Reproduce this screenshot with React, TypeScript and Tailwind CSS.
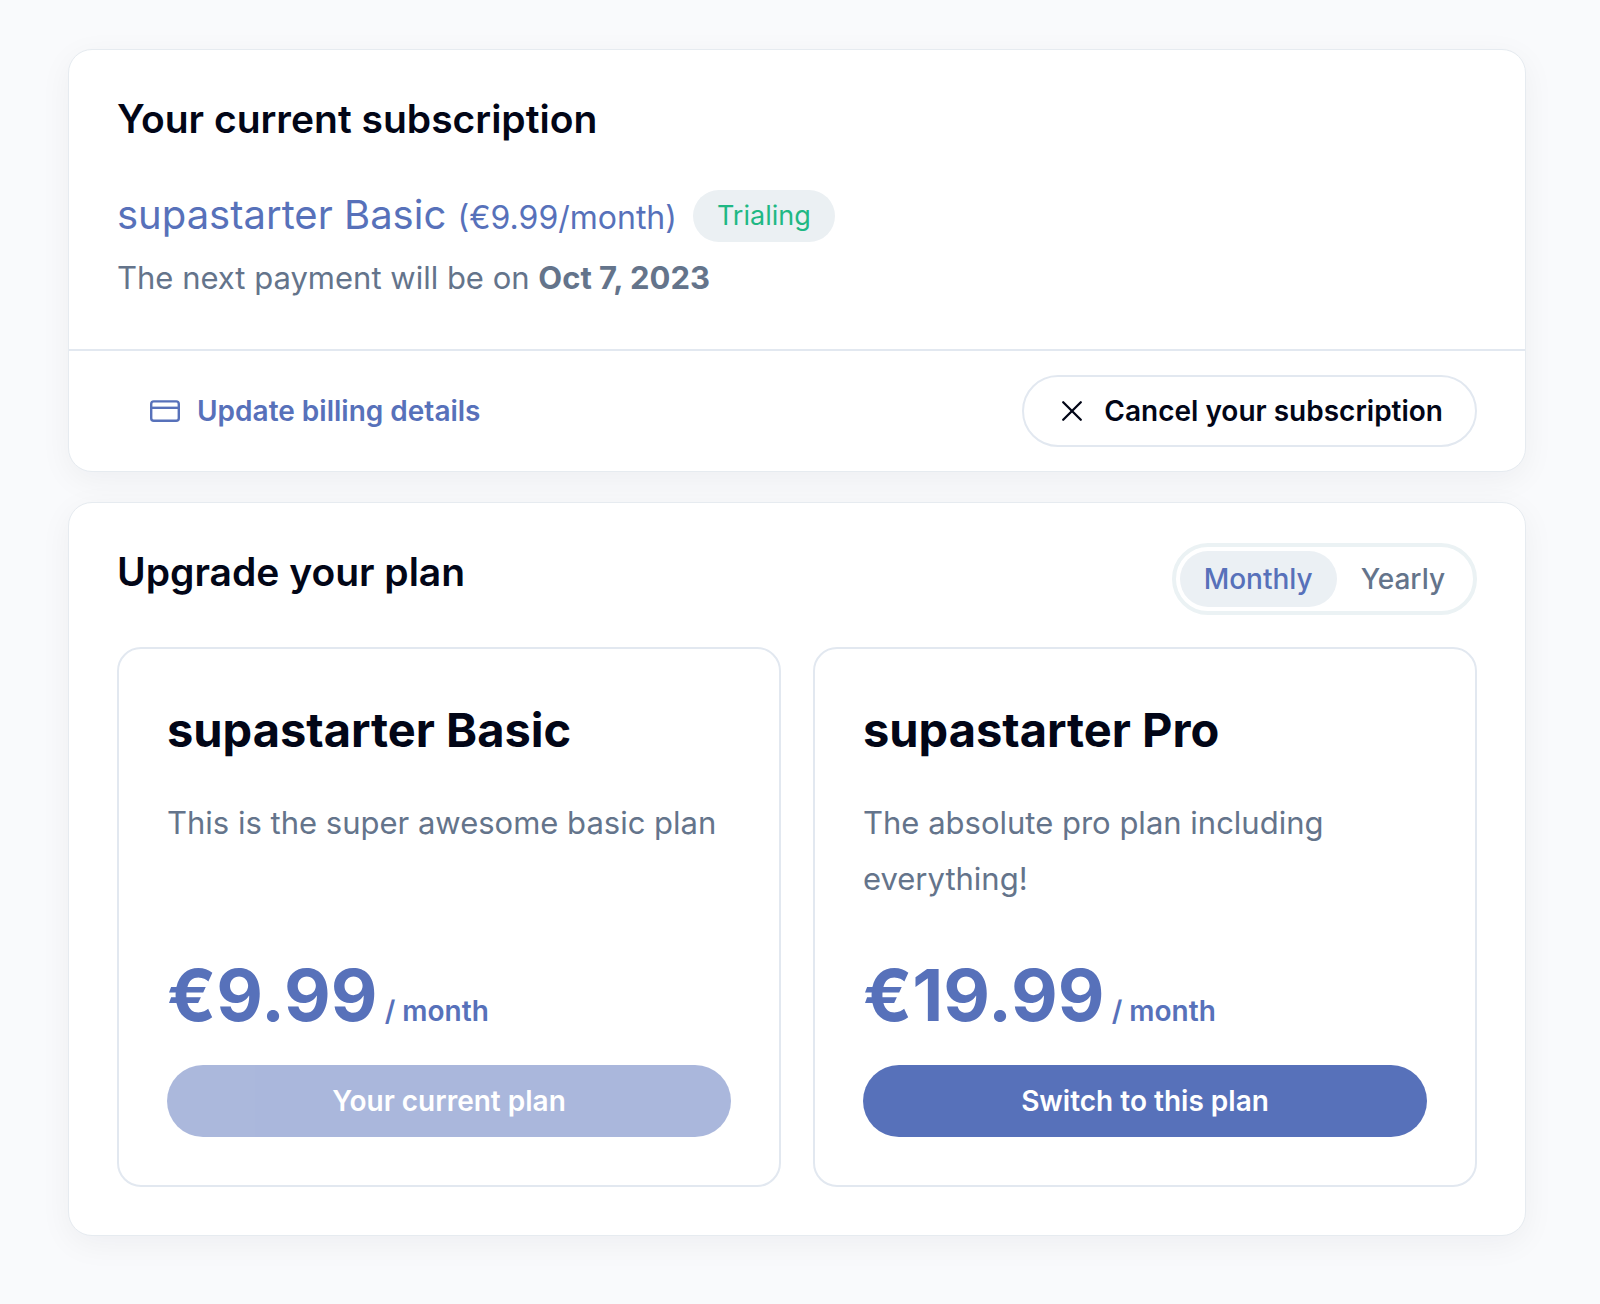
import { useState } from "react";

const plans = [
  {
    name: "supastarter Basic",
    description: "This is the super awesome basic plan",
    price: "€9.99",
    action: "Your current plan",
    current: true,
  },
  {
    name: "supastarter Pro",
    description: "The absolute pro plan including everything!",
    price: "€19.99",
    action: "Switch to this plan",
    current: false,
  },
];

function CardIcon() {
  return (
    <svg className="size-8 shrink-0" viewBox="0 0 32 32" fill="none" stroke="currentColor" strokeWidth="2.4" aria-hidden="true">
      <rect x="2.2" y="6.4" width="27.6" height="19.4" rx="2.6" />
      <path d="M2 12.8h28" />
    </svg>
  );
}

function CloseIcon() {
  return (
    <svg className="size-8 shrink-0" viewBox="0 0 32 32" fill="none" stroke="currentColor" strokeWidth="2.3" strokeLinecap="round" aria-hidden="true">
      <path d="M7.2 7.2l17.6 17.6M24.8 7.2L7.2 24.8" />
    </svg>
  );
}

const cardClass =
  "rounded-3xl border border-[#e6ebf0] bg-white shadow-[0_8px_32px_rgba(15,23,42,0.05)]";

function SubscriptionCard() {
  return (
    <section className={cardClass}>
      <div className="px-12 pt-10 pb-[45px]">
        <h2 className="text-[39px] leading-[58px] font-semibold">Your current subscription</h2>
        <div className="mt-8 flex h-[72px] items-center gap-4">
          <p className="text-[40px] leading-[60px] text-[#5771ba]">
            supastarter Basic <small className="text-[32px]">(€9.99/month)</small>
          </p>
          <span className="rounded-full bg-[#ebf0f3] px-6 text-[27px] leading-[52px] text-[#1fb884]">
            Trialing
          </span>
        </div>
        <p className="text-[31px] leading-[52px] text-[#64748b]">
          The next payment will be on <strong className="font-bold">Oct 7, 2023</strong>
        </p>
      </div>
      <div className="flex items-center justify-between border-t-2 border-[#e2e8f0] px-12 py-6">
        <button type="button" className="flex h-[72px] items-center gap-4 px-8 text-[28px] font-semibold text-[#5771ba]">
          <CardIcon />
          Update billing details
        </button>
        <button type="button" className="flex h-[72px] items-center gap-4 rounded-full border-2 border-[#e2e8f0] px-8 text-[28px] font-semibold">
          <CloseIcon />
          Cancel your subscription
        </button>
      </div>
    </section>
  );
}

function UpgradeCard() {
  const [period, setPeriod] = useState("Monthly");
  return (
    <section className={cardClass}>
      <div className="px-12 pt-10 pb-12">
        <div className="flex items-start justify-between">
          <h2 className="text-[39px] leading-[58px] font-semibold">Upgrade your plan</h2>
          <div className="flex rounded-full border-4 border-[#ebf2f4] p-1">
            {["Monthly", "Yearly"].map((label) => (
              <button
                key={label}
                type="button"
                aria-pressed={period === label}
                onClick={() => setPeriod(label)}
                className={
                  period === label
                    ? "h-14 rounded-full bg-[#ebf0f4] px-6 text-[28px] font-medium text-[#5771ba]"
                    : "h-14 rounded-full px-6 text-[28px] font-medium text-[#64748b]"
                }
              >
                {label}
              </button>
            ))}
          </div>
        </div>
        <div className="mt-8 grid grid-cols-2 gap-8">
          {plans.map((plan) => (
            <article key={plan.name} className="flex flex-col rounded-3xl border-2 border-[#e2e8f0] p-12">
              <h3 className="text-[47px] leading-[66px] font-bold">{plan.name}</h3>
              <p className="mt-8 text-[31px] leading-[56px] text-[#64748b]">{plan.description}</p>
              <div className="mt-auto pt-[46px] text-[#5771ba]">
                <strong className="text-[72px] leading-[84px] font-bold">{plan.price}</strong>
                <span className="text-[28px] font-semibold"> / month</span>
              </div>
              <button
                type="button"
                disabled={plan.current}
                className="mt-7 h-[72px] rounded-full bg-[#5771ba] text-[28px] font-semibold text-white disabled:opacity-50"
              >
                {plan.action}
              </button>
            </article>
          ))}
        </div>
      </div>
    </section>
  );
}

export default function App() {
  return (
    <main className="flex min-h-screen flex-col gap-[30px] bg-[#f9fafc] pt-[49px] pr-[74px] pb-[67px] pl-[68px] font-['Inter',sans-serif] text-[#020617]">
      <SubscriptionCard />
      <UpgradeCard />
    </main>
  );
}
